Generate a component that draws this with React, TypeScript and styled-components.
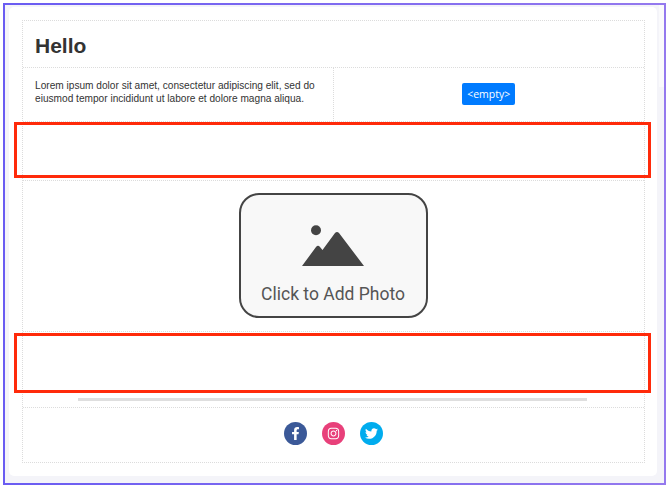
import React from 'react';
import styled, { createGlobalStyle } from 'styled-components';
import { FaFacebookF, FaInstagram, FaTwitter } from 'react-icons/fa';

const GlobalStyle = createGlobalStyle`
  html, body {
    margin: 0;
    padding: 0;
    background: #fff;
    font-family: "Liberation Sans", Arial, sans-serif;
  }
  * {
    box-sizing: border-box;
  }
`;

const Frame = styled.div`
  position: relative;
  width: 663px;
  height: 482px;
  margin: 3px 0 0 3px;
  padding: 2px 7px 7px 4px;
  background: #f4f4f9;
  border: 2px solid;
  border-image: linear-gradient(90deg, #6a5cf2, #9479ee) 1;
`;

const ScrollTrack = styled.div`
  position: absolute;
  top: 0;
  right: 0;
  width: 5px;
  height: 82px;
  background: #fafafc;
`;

const Sheet = styled.div`
  height: 100%;
  padding: 13px 12px 13px 13px;
  background: #fff;
  border-radius: 5px;
`;

const Layout = styled.div`
  height: 100%;
  display: flex;
  flex-direction: column;
  border: 1px dotted #dcdcdc;
`;

const Row = styled.div<{ $height: number; $divided?: boolean; $footer?: boolean; $lift?: number }>`
  flex: 0 0 ${p => p.$height}px;
  display: flex;
  align-items: center;
  justify-content: center;
  padding-bottom: ${p => p.$lift ?? 0}px;
  border-bottom: ${p => (p.$divided ? '1px dotted #dcdcdc' : 'none')};
  border-top: ${p => (p.$footer ? '1px dotted #dcdcdc' : 'none')};
`;

const Title = styled.h1`
  flex: 1;
  margin: 0;
  padding: 4px 0 0 12px;
  font-size: 21px;
  font-weight: 700;
  color: #333;
`;

const Cell = styled.div<{ $first?: boolean }>`
  flex: 0 0 50%;
  height: 100%;
  display: flex;
  align-items: center;
  justify-content: ${p => (p.$first ? 'flex-start' : 'center')};
  padding-left: ${p => (p.$first ? '12px' : '0')};
  padding-bottom: ${p => (p.$first ? '5px' : '2px')};
  border-right: ${p => (p.$first ? '1px dotted #dcdcdc' : 'none')};
`;

const Copy = styled.p`
  margin: 0;
  font-size: 10.15px;
  line-height: 13px;
  color: #333;
  white-space: nowrap;
`;

const EmptyButton = styled.button`
  width: 53px;
  height: 22px;
  padding: 0;
  border: none;
  border-radius: 2px;
  background: #007bff;
  color: #fff;
  font-family: "Open Sans", sans-serif;
  font-size: 10.5px;
`;

const PhotoButton = styled.button`
  width: 189px;
  height: 125px;
  display: flex;
  flex-direction: column;
  align-items: center;
  padding: 30px 1px 0 0;
  background: #f8f8f8;
  border: 2px solid #444;
  border-radius: 20px;
  color: #555;
  font-family: Roboto, sans-serif;
  font-size: 17.5px;
`;

const PhotoLabel = styled.span`
  margin-top: 17px;
`;

const Rule = styled.div`
  flex: 0 0 3px;
  margin: 0 57px 6px 55px;
  background: #dedede;
`;

const Socials = styled.div`
  display: flex;
  gap: 15px;
  margin-left: -1px;
`;

const SocialIcon = styled.a<{ $color: string }>`
  width: 23px;
  height: 23px;
  display: flex;
  align-items: center;
  justify-content: center;
  border-radius: 50%;
  background: ${p => p.$color};
  color: #fff;
  font-size: 13px;
`;

const Highlight = styled.div<{ $top: number; $height: number }>`
  position: absolute;
  left: 9px;
  top: ${p => p.$top}px;
  width: 637px;
  height: ${p => p.$height}px;
  border: 3px solid #ff2a0a;
`;

const PhotoIcon = () => (
  <svg width="62" height="42" viewBox="0 0 62 42" fill="#444">
    <circle cx="14" cy="5.3" r="5" />
    <path d="M0 41 L14 22 Q16 19.5 18 22 L20.5 25 L33 8 Q35 6 37 8 L62 41 Z" />
  </svg>
);

export default function App() {
  return (
    <>
      <GlobalStyle />
      <Frame>
        <ScrollTrack />
        <Sheet>
          <Layout>
            <Row $height={47} $divided>
              <Title>Hello</Title>
            </Row>
            <Row $height={54} $divided>
              <Cell $first>
                <Copy>
                  Lorem ipsum dolor sit amet, consectetur adipiscing elit, sed do
                  <br />
                  eiusmod tempor incididunt ut labore et dolore magna aliqua.
                </Copy>
              </Cell>
              <Cell>
                <EmptyButton>&lt;empty&gt;</EmptyButton>
              </Cell>
            </Row>
            <Row $height={59} $divided />
            <Row $height={151} $divided $lift={2}>
              <PhotoButton>
                <PhotoIcon />
                <PhotoLabel>Click to Add Photo</PhotoLabel>
              </PhotoButton>
            </Row>
            <Row $height={66} />
            <Rule />
            <Row $height={55} $footer $lift={4}>
              <Socials>
                <SocialIcon $color="#3b5998"><FaFacebookF /></SocialIcon>
                <SocialIcon $color="#e8407a"><FaInstagram /></SocialIcon>
                <SocialIcon $color="#00acee"><FaTwitter /></SocialIcon>
              </Socials>
            </Row>
          </Layout>
        </Sheet>
        <Highlight $top={117} $height={56} />
        <Highlight $top={328} $height={60} />
      </Frame>
    </>
  );
}
